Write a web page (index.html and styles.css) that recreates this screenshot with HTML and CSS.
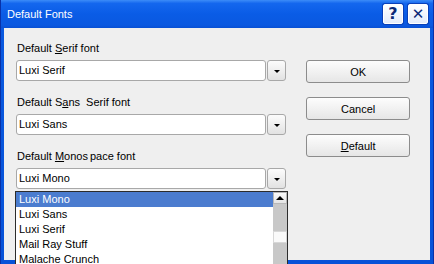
FILE: index.html
```html
<!DOCTYPE html>
<html lang="en">
<head>
    <meta charset="UTF-8">
    <title>Default Fonts</title>
    <link rel="stylesheet" href="styles.css">
</head>
<body>
    <div class="window">
        <div class="title-bar">
            <span class="title">Default Fonts</span>
            <div class="title-buttons">
                <button class="title-button">?</button>
                <button class="title-button close">&#x2715;</button>
            </div>
        </div>

        <div class="client">
            <div class="font-fields">
                <div class="field">
                    <label>Default <u>S</u>erif font</label>
                    <div class="combo">
                        <div class="combo-text">Luxi Serif</div>
                        <div class="combo-arrow"><span class="arrow-down"></span></div>
                    </div>
                </div>
                <div class="field">
                    <label>Default S<u>a</u>ns&nbsp; Serif font</label>
                    <div class="combo">
                        <div class="combo-text">Luxi Sans</div>
                        <div class="combo-arrow"><span class="arrow-down"></span></div>
                    </div>
                </div>
                <div class="field">
                    <label>Default <u>M</u>onos<span class="gap">pace</span> font</label>
                    <div class="combo">
                        <div class="combo-text">Luxi Mono</div>
                        <div class="combo-arrow"><span class="arrow-down"></span></div>
                    </div>
                </div>
            </div>

            <div class="actions">
                <button class="push">OK</button>
                <button class="push">Cancel</button>
                <button class="push"><u>D</u>efault</button>
            </div>
        </div>

        <!-- open drop-down of the monospace combo -->
        <div class="popup">
            <ul class="popup-list">
                <li class="selected">Luxi Mono</li>
                <li>Luxi Sans</li>
                <li>Luxi Serif</li>
                <li>Mail Ray Stuff</li>
                <li>Malache Crunch</li>
            </ul>
            <div class="scrollbar">
                <div class="scroll-up"><span class="arrow-up"></span></div>
                <div class="scroll-track"></div>
                <div class="scroll-thumb"></div>
                <div class="scroll-track"></div>
            </div>
        </div>
    </div>
</body>
</html>
```

FILE: styles.css
```css
* {
    margin: 0;
    padding: 0;
    box-sizing: border-box;
}

body {
    font-family: "Liberation Sans", Arial, sans-serif;
    font-size: 11px;
    color: #000;
    background: #0a5ae0;
    width: 434px;
    height: 264px;
    overflow: hidden;
}

.window {
    position: relative;
    width: 434px;
    height: 264px;
    background: linear-gradient(to bottom, #0a5ae0, #0752d8);
    border-left: 1px solid #0831a8;
    border-right: 1px solid #0831a8;
    padding: 0 3px 4px 3px;
    display: flex;
    flex-direction: column;
}

.title-bar {
    height: 28px;
    margin: 0 -3px;
    padding: 0 5px 0 6px;
    display: flex;
    align-items: center;
    justify-content: space-between;
    background: linear-gradient(to bottom, #3c8cf8 0%, #1467ee 12%, #0a5ce6 50%, #0a58e0 90%, #0850d4 100%);
}

.title {
    color: #fff;
    font-size: 11px;
    padding-bottom: 1px;
}

.title-buttons {
    display: flex;
    gap: 5px;
}

.title-button {
    width: 20px;
    height: 20px;
    border: 1px solid #fff;
    border-radius: 2px;
    background: linear-gradient(to bottom, #ffffff, #e4ecfb);
    color: #0c2a78;
    font-family: "DejaVu Sans", sans-serif;
    font-size: 16px;
    font-weight: bold;
    line-height: 18px;
    text-align: center;
    box-shadow: 0 0 0 1px #0a40b8;
}

.title-button.close {
    font-size: 15px;
}

.client {
    flex: 1;
    background: #efefef;
    display: flex;
    padding: 13px 20px 0 12px;
    gap: 20px;
}

.font-fields {
    width: 271px;
    display: flex;
    flex-direction: column;
    gap: 14px;
}

.field label {
    display: block;
    height: 14px;
    line-height: 14px;
    margin-bottom: 5px;
    padding-left: 1px;
}

.gap {
    margin-left: 2px;
}

.combo {
    height: 21px;
    display: flex;
    gap: 1px;
}

.combo-text {
    flex: 1;
    background: #fff;
    border: 1px solid #a8a8a8;
    border-radius: 3px;
    padding-left: 2px;
    line-height: 19px;
}

.combo-arrow {
    width: 19px;
    border: 1px solid #a8a8a8;
    border-radius: 3px;
    background: linear-gradient(to bottom, #fcfcfc, #e2e2e2);
    display: flex;
    align-items: center;
    justify-content: center;
}

.arrow-down {
    width: 0;
    height: 0;
    margin-top: 2px;
    border-left: 3px solid transparent;
    border-right: 3px solid transparent;
    border-top: 3px solid #000;
}

.arrow-up {
    width: 0;
    height: 0;
    border-left: 4px solid transparent;
    border-right: 4px solid transparent;
    border-bottom: 4px solid #000;
}

.actions {
    width: 104px;
    padding-top: 19px;
    display: flex;
    flex-direction: column;
    gap: 14px;
}

.push {
    height: 23px;
    font-family: "Liberation Sans", Arial, sans-serif;
    font-size: 11px;
    color: #000;
    border: 1px solid #8c8c8c;
    border-radius: 3px;
    background: linear-gradient(to bottom, #fdfdfd, #e6e6e6);
}

.popup {
    position: absolute;
    left: 14px;
    top: 191px;
    width: 273px;
    height: 80px;
    background: #fff;
    border: 1px solid #2c2c2c;
    display: flex;
}

.popup-list {
    flex: 1;
    list-style: none;
}

.popup-list li {
    height: 15px;
    line-height: 15px;
    padding-left: 3px;
}

.popup-list li.selected {
    background: #4b7ccf;
    color: #fff;
}

.scrollbar {
    width: 14px;
    display: flex;
    flex-direction: column;
    background: #c8c8c8;
}

.scroll-up {
    height: 15px;
    background: linear-gradient(to bottom, #fafafa, #e4e4e4);
    border: 1px solid #b8b8b8;
    display: flex;
    align-items: center;
    justify-content: center;
}

.scroll-track {
    height: 35px;
    background: #c8c8c8;
}

.scroll-thumb {
    height: 14px;
    background: #fafafa;
    border: 1px solid #d8d8d8;
}
```
